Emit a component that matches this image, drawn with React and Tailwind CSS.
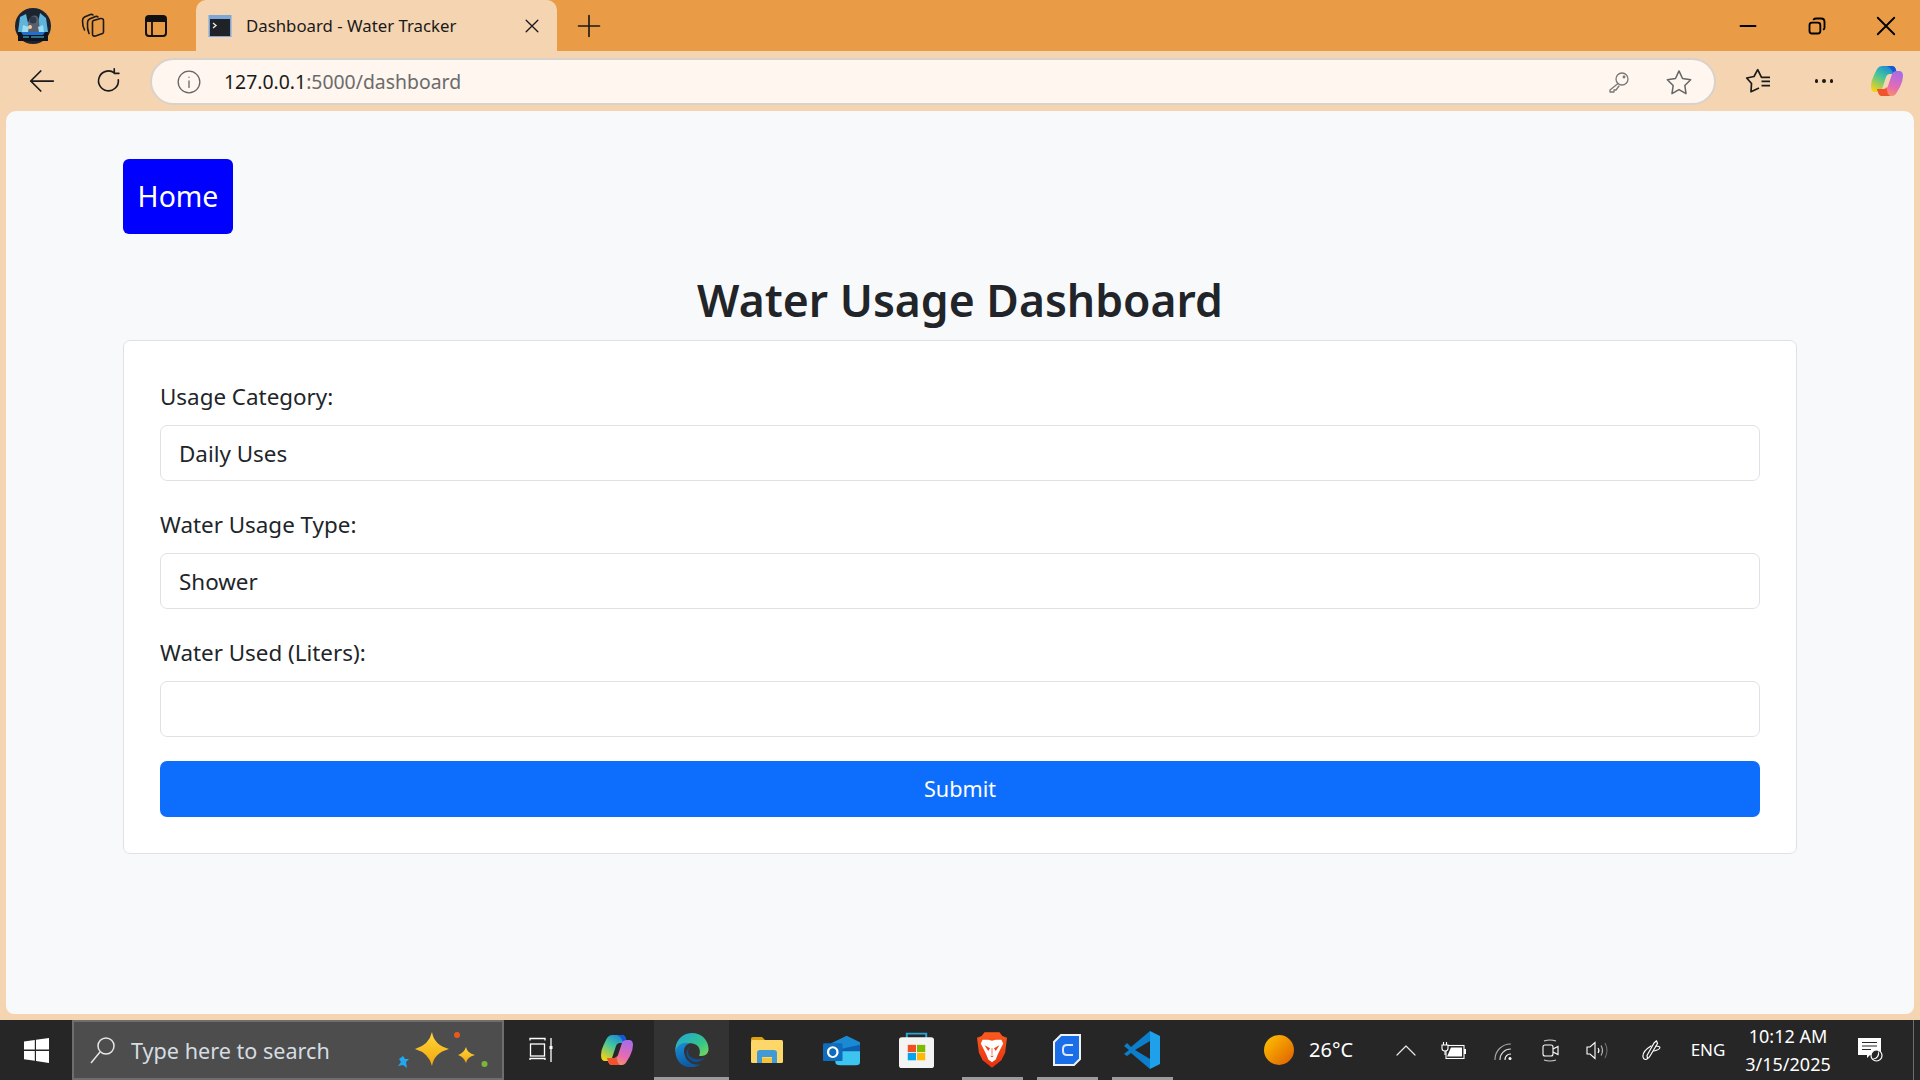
import React from 'react';

const ui = { fontFamily: '"Noto Sans", "Open Sans", sans-serif' };

const Avatar = () => (
  <svg width="36" height="36" viewBox="0 0 36 36">
    <circle cx="18" cy="18" r="18" fill="#1b2431" />
    <path d="M5 9 L11 6 L13 15 L16 10 L20 10 L23 15 L25 5 L31 10 L33 24 H3 Z" fill="#5fb4dc" />
    <path d="M13 24 Q12 12 17 8 Q23 6 24 13 L25 24 Z" fill="#58606e" />
    <circle cx="18" cy="12" r="3.5" fill="#2f3947" />
    <path d="M8 17 L14 19 L13 24 H7 Z M28 17 L23 19 L24 24 H29 Z" fill="#9adcf0" />
    <circle cx="15" cy="19" r="2" fill="#f2c9a0" />
    <rect x="3" y="24" width="30" height="9" fill="#0d1420" />
    <path d="M6 24 H30 L28 27 H8 Z" fill="#1e6fd0" />
    <path d="M8 29 H14 M16 29 H29" stroke="#3d8f9c" strokeWidth="1.6" />
  </svg>
);

const Collections = () => (
  <svg width="25" height="25" viewBox="0 0 25 25" fill="none" stroke="#1a1a1a" strokeWidth="1.6" strokeLinecap="round" strokeLinejoin="round">
    <path d="M12.5 9 Q12.5 8 13.5 7.5 L20.5 5.5 Q23.5 5 23.5 8 V19 Q23.5 20 22.5 20.5 L15.5 23 Q12.5 23.5 12.5 21 Z" />
    <path d="M9 20.5 Q7 16 7.5 10 Q7.5 7 9.5 6 L15.5 3.5 Q17 3 18 4" />
    <path d="M4.5 17 Q2.5 13 2.5 8 Q2.5 5 4.5 4 L10.5 1.5 Q12 1 13 2" />
  </svg>
);

const Sidebar = () => (
  <svg width="24" height="26" viewBox="0 0 24 26" fill="none">
    <rect x="2" y="3" width="20" height="20" rx="3" stroke="#111" strokeWidth="2" />
    <path d="M2 6 Q2 3 5 3 H19 Q22 3 22 6 V9 H2 Z" fill="#111" />
    <path d="M8 9 V23" stroke="#111" strokeWidth="1.8" />
  </svg>
);

const Favicon = () => (
  <svg width="24" height="24" viewBox="0 0 24 24">
    <rect x="0.5" y="1" width="23" height="22" fill="#7ea6d8" />
    <rect x="2" y="5" width="20" height="17" fill="#1f2328" />
    <path d="M5 9 L8 11.5 L5 14" fill="none" stroke="#e8e8e8" strokeWidth="1.4" />
  </svg>
);

const Line = ({ size = 24, children, stroke = '#1a1a1a', width = 1.6 }) => (
  <svg width={size} height={size} viewBox="0 0 24 24" fill="none" stroke={stroke} strokeWidth={width} strokeLinecap="round" strokeLinejoin="round">
    {children}
  </svg>
);

const Copilot = ({ size = 34, id = 'a' }) => (
  <svg width={size} height={size} viewBox="0 0 34 34">
    <defs>
      <linearGradient id={`cpA${id}`} x1="0.8" y1="0" x2="0.2" y2="1">
        <stop offset="0" stopColor="#1b7fe0" />
        <stop offset="0.45" stopColor="#3fc4a0" />
        <stop offset="1" stopColor="#f5d316" />
      </linearGradient>
      <linearGradient id={`cpB${id}`} x1="0.7" y1="0" x2="0.3" y2="1">
        <stop offset="0" stopColor="#a86ce8" />
        <stop offset="0.6" stopColor="#e86bb0" />
        <stop offset="1" stopColor="#f59a5a" />
      </linearGradient>
    </defs>
    <path d="M12 2 H22 Q25 2 26 6 L27 10 H20 Q17 10 16 13 L12 25 Q11 28 8 28 H5 Q1 28 1 22 Q1 17 4 11 L7 5 Q9 2 12 2 Z" fill={`url(#cpA${id})`} />
    <path d="M17 2 H22 Q25 2 26 6 L27 10 H23 Q22 4 17 2 Z" fill="#1558d6" />
    <path d="M22 32 H12 Q9 32 8 28 L7 25 H14 Q17 25 18 22 L22 10 Q23 7 27 7 H29 Q33 7 33 12 Q33 17 30 23 L27 28 Q25 32 22 32 Z" fill={`url(#cpB${id})`} />
    <path d="M12 32 H20 Q17 30 16.5 23 Q16 25 14 25 H7 L8 28 Q9 32 12 32 Z" fill="#f0532d" />
  </svg>
);

const FavStar = () => (
  <svg width="30" height="30" viewBox="0 0 30 30" fill="none" stroke="#1a1a1a" strokeWidth="1.7" strokeLinejoin="round">
    <path d="M27 11.3 H18.5 L14.7 3.7 L11 10.5 L3.7 12 L8.5 17.5 L8 25.7 L16 22" />
    <path d="M18.5 15.3 H27 M18.5 19.7 H27" />
  </svg>
);

const WinLogo = () => (
  <svg width="25" height="25" viewBox="0 0 25 25" fill="#fff">
    <path d="M0 3.6 L10.8 2 V11.6 H0 Z" />
    <path d="M12 1.8 L25 0 V11.6 H12 Z" />
    <path d="M0 13 H10.8 V22.8 L0 21.2 Z" />
    <path d="M12 13 H25 V25 L12 23 Z" />
  </svg>
);

const Sparkles = () => (
  <svg width="92" height="48" viewBox="0 0 92 48">
    <defs>
      <linearGradient id="spark" x1="0" y1="0" x2="0" y2="1">
        <stop offset="0" stopColor="#ffd83b" />
        <stop offset="1" stopColor="#f2a50c" />
      </linearGradient>
    </defs>
    <path d="M36 6 Q38 19 53 23 Q38 27 36 40 Q33 27 19 23 Q33 19 36 6 Z" fill="url(#spark)" />
    <path d="M70 21 Q71 27 79 29 Q71 31 70 37 Q68 31 62 29 Q68 27 70 21 Z" fill="url(#spark)" />
    <path d="M7 30 L9 33 L13 33 L10 36 L11 42 L7 39 L2 40 L5 36 L3 33 Z" fill="#22a7f0" />
    <circle cx="61" cy="9" r="3" fill="#e8591b" />
    <circle cx="88.5" cy="38" r="3" fill="#7db53a" />
  </svg>
);

const TaskView = () => (
  <svg width="26" height="26" viewBox="0 0 26 26" fill="none" stroke="#fff" strokeWidth="1.3">
    <path d="M1 3.5 V1.5 H16 V3.5" />
    <rect x="1.5" y="7" width="14" height="12" />
    <path d="M1 23 V21.5 H16 V23" />
    <path d="M22 1 V25" />
    <rect x="20.5" y="9" width="3" height="3" fill="#fff" stroke="none" />
  </svg>
);

const Edge = () => (
  <svg width="37" height="36" viewBox="0 0 38 38">
    <defs>
      <linearGradient id="edgeA" x1="0" y1="0" x2="1" y2="1">
        <stop offset="0" stopColor="#1fa4dc" />
        <stop offset="0.6" stopColor="#34c48c" />
        <stop offset="1" stopColor="#7fd857" />
      </linearGradient>
      <linearGradient id="edgeB" x1="0" y1="0" x2="0.4" y2="1">
        <stop offset="0" stopColor="#1b8fd8" />
        <stop offset="1" stopColor="#0c59a4" />
      </linearGradient>
    </defs>
    <path d="M19 1 C30 1 37 9 37 18 C37 24 32 26 27 25 C29 21 28 13 19 12 C11 11 5 16 2 21 C1 10 9 1 19 1 Z" fill="url(#edgeA)" />
    <path d="M2 20 C4 13 11 10 17 12 C11 14 10 20 12 25 C14 31 21 36 28 34 C24 37 20 37 17 37 C8 37 2 29 2 20 Z" fill="url(#edgeB)" />
    <path d="M19 15 C14 17 14 24 19 27 C24 30 31 29 34 26 C29 33 21 33 17 29 C12 25 13 17 19 15 Z" fill="#134f8f" />
  </svg>
);

const Folder = () => (
  <svg width="32" height="28" viewBox="0 0 32 28">
    <path d="M0 3 Q0 1 2 1 H11 L15 5 H0 Z" fill="#dca012" />
    <rect x="0" y="4" width="32" height="23" rx="1.5" fill="#fdd768" />
    <path d="M6 27 V17 Q6 14 9 14 H23 Q26 14 26 17 V27 H21 V21 H11 V27 Z" fill="#3f9ad6" />
    <rect x="11" y="22" width="10" height="5" fill="#f3c33c" />
  </svg>
);

const Outlook = () => (
  <svg width="37" height="31" viewBox="0 0 36 38" preserveAspectRatio="none">
    <path d="M8 10 L23 1 L36 9 V18 H8 Z" fill="#1a8ad4" />
    <path d="M36 12 V20 L16 33 L14 18 Z" fill="#0f5fb0" />
    <path d="M12 20 L36 20 V33 Q36 37 32 37 H17 Q12 37 12 33 Z" fill="#3cc6ef" />
    <rect x="0" y="10" width="19" height="22" rx="1.5" fill="#0f6cbd" />
    <ellipse cx="9.5" cy="21" rx="4.6" ry="6" fill="none" stroke="#fff" strokeWidth="2.2" />
  </svg>
);

const Store = () => (
  <svg width="35" height="36" viewBox="0 0 36 42" preserveAspectRatio="none">
    <path d="M8 9 V2 H28 V9" fill="none" stroke="#2aa5d9" strokeWidth="2" />
    <rect x="0" y="6" width="36" height="36" rx="3" fill="#f4f4f4" />
    <rect x="9" y="15" width="8.5" height="8.5" fill="#f25022" />
    <rect x="18.5" y="15" width="8.5" height="8.5" fill="#7fba00" />
    <rect x="9" y="24.5" width="8.5" height="8.5" fill="#00a4ef" />
    <rect x="18.5" y="24.5" width="8.5" height="8.5" fill="#ffb900" />
  </svg>
);

const Brave = () => (
  <svg width="30" height="36" viewBox="0 0 32 38">
    <defs>
      <linearGradient id="braveG" x1="0" y1="0" x2="0" y2="1">
        <stop offset="0" stopColor="#fb5a1f" />
        <stop offset="1" stopColor="#e8300f" />
      </linearGradient>
    </defs>
    <path d="M8 0 H24 L27 4 L32 6 L30 22 L26 30 L16 38 L6 30 L2 22 L0 6 L5 4 Z" fill="url(#braveG)" />
    <path d="M6 8 L12 8 L16 9 L20 8 L26 8 L28 12 L25 18 L22 24 L20 29 L16 32 L12 29 L10 24 L7 18 L4 12 Z" fill="#fff" />
    <path d="M8 14 L14 17 L12 20 Z M24 14 L18 17 L20 20 Z M14 25 H18 L16 27 Z" fill="#f1471d" />
    <path d="M16 17 V24" stroke="#f1471d" strokeWidth="0.8" />
  </svg>
);

const CApp = () => (
  <svg width="28" height="32" viewBox="0 0 28 32">
    <path d="M8 1 H27 V25 L21 31 H1 V8 Z" fill="#1a6fe8" stroke="#f2f2f2" strokeWidth="2" />
    <path d="M20 11 H14 Q10 11 10 15 V17 Q10 21 14 21 H20" fill="none" stroke="#dbe8fb" strokeWidth="2" />
  </svg>
);

const VSCode = () => (
  <svg width="36" height="38" viewBox="0 0 36 38">
    <path d="M26 0 L36 5 V33 L26 38 Z" fill="#1fa0ea" />
    <path d="M26 0 L26 10 L11 19 L26 28 V38 L7 22 L3 25 L0 23 L5 19 L0 15 L3 12 L7 16 Z" fill="#0b7fcc" />
  </svg>
);

const Battery = () => (
  <svg width="25" height="17" viewBox="0 0 25 17" fill="none" stroke="#fff" strokeWidth="1.1">
    <rect x="5" y="3.5" width="18" height="13" />
    <path d="M10 5.5 H21 V14.5 H6 Z" fill="#fff" stroke="none" />
    <rect x="23" y="7" width="2" height="5" fill="#fff" stroke="none" />
    <path d="M1 3 V6.5 Q1 9 4 9 Q7 9 7 6.5 V3 Z" fill="#262626" />
    <path d="M2.5 0 V3 M5.5 0 V3 M4 9 V13" />
  </svg>
);

const Wifi = () => (
  <svg width="18" height="19" viewBox="0 0 18 19" fill="none" strokeWidth="1.2" strokeLinecap="round">
    <path d="M1 18.5 A15.5 15.5 0 0 1 16.5 3" stroke="#a8a8a8" />
    <path d="M6 18.5 A10.5 10.5 0 0 1 16.5 8" stroke="#d6d6d6" />
    <path d="M11 18.5 A5.5 5.5 0 0 1 16.5 13" stroke="#fff" />
    <circle cx="16" cy="17.5" r="1.5" fill="#fff" stroke="none" />
  </svg>
);

const CameraTray = () => (
  <svg width="17" height="23" viewBox="0 0 17 23" fill="none" stroke="#fff" strokeWidth="1.1">
    <path d="M2 2 Q8 0 14 2 M2 21 Q8 23 14 21" stroke="#cfcfcf" />
    <rect x="1" y="6" width="10" height="11" rx="2" />
    <path d="M11 10 L16 7.5 V15.5 L11 13" />
  </svg>
);

const Volume = () => (
  <svg width="22" height="19" viewBox="0 0 22 19" fill="none" stroke="#fff" strokeWidth="1.1">
    <path d="M1 6 H4 L9 1.5 V17.5 L4 13 H1 Z" />
    <path d="M12 7 Q14 9.5 12 12" />
    <path d="M15 4.5 Q18 9.5 15 14.5" stroke="#bdbdbd" />
    <path d="M19 2 Q23 9.5 19 17" stroke="#6e6e6e" />
  </svg>
);

const PenTray = () => (
  <svg width="20" height="21" viewBox="0 0 20 21" fill="none" stroke="#fff" strokeWidth="1.2" strokeLinejoin="round" strokeLinecap="round">
    <path d="M12 3 L14.5 0.8 L15.5 3.5 L8 16 Q7 18 5.5 18.5 L5 15.5 Z" />
    <path d="M9 6 C4 9 0.5 13 1 17 C1.5 20 4.5 20 5.5 18.5" />
    <path d="M14 6 C19 6 20 9 12 11" />
  </svg>
);

const Notification = () => (
  <svg width="25" height="24" viewBox="0 0 25 24">
    <path d="M0 0 H23 V17 H12 L9 20 V17 H0 Z" fill="#fff" />
    <path d="M4 4.5 H19 M4 8 H19 M4 11.5 H13" stroke="#262626" strokeWidth="1.2" />
    <circle cx="18.5" cy="17.5" r="5.5" fill="#262626" stroke="#fff" strokeWidth="1.2" />
    <path d="M20 12.5 A5.5 5.5 0 0 1 14 21 A6.5 6.5 0 0 0 20 12.5 Z" fill="#fff" />
  </svg>
);

const TaskIcon = ({ active, bar, children }) => (
  <div className={`w-[75px] h-full flex items-center justify-center relative ${active ? 'bg-[#333333]' : ''}`}>
    {children}
    {bar && <div className={`absolute bottom-0 h-[3px] bg-[#9b9b9b] ${active ? 'left-0 right-0' : 'left-[8px] right-[6px]'}`} />}
  </div>
);

const Field = ({ label, value, last }) => (
  <div className={last ? 'mb-[24px]' : 'mb-[29px]'}>
    <label className="block text-[22.4px] leading-[30px] h-[30px] mb-[13px] text-[#212529]">{label}</label>
    <input
      readOnly
      value={value}
      className="block w-full h-[56px] px-[18px] rounded-[7px] border border-[#dee2e6] bg-white text-[22.4px] text-[#212529] outline-none"
    />
  </div>
);

export default function App() {
  return (
    <div className="w-[1920px] h-[1080px] overflow-hidden flex flex-col bg-[#f5d4b2]" style={ui}>
      {/* title bar */}
      <div className="h-[51px] shrink-0 flex items-center bg-[#e99b45]">
        <div className="w-[66px] flex justify-center"><Avatar /></div>
        <div className="w-[60px] flex justify-center pr-[8px]"><Collections /></div>
        <div className="w-[62px] flex justify-center pr-[2px]"><Sidebar /></div>
        <div className="ml-[8px] w-[361px] h-full flex items-center rounded-t-[10px] bg-[#f5d4b2] pl-[12px] pr-[15px]">
          <Favicon />
          <span className="ml-[14px] text-[16.8px] text-[#1a1a1a] flex-1 whitespace-nowrap">Dashboard - Water Tracker</span>
          <Line size={20}><path d="M5 5 L19 19 M19 5 L5 19" /></Line>
        </div>
        <div className="ml-[18px]"><Line size={28} width={1.4}><path d="M12 3 V21 M3 12 H21" /></Line></div>
        <div className="ml-auto flex items-center">
          <div className="w-[68px] flex justify-center"><Line size={20} stroke="#000" width={2.2}><path d="M3 12 H21" /></Line></div>
          <div className="w-[70px] flex justify-center">
            <Line size={20} stroke="#000" width={2.2}>
              <rect x="3" y="8" width="13" height="13" rx="3" />
              <path d="M8 4 Q9 3 11 3 H17 Q21 3 21 7 V14 Q21 15.5 20 16" />
            </Line>
          </div>
          <div className="w-[68px] flex justify-center"><Line size={22} stroke="#000" width={2}><path d="M3 3 L21 21 M21 3 L3 21" /></Line></div>
        </div>
      </div>

      {/* toolbar */}
      <div className="h-[60px] shrink-0 flex items-center">
        <div className="w-[84px] flex justify-center"><Line size={30} width={1.4}><path d="M21 12 H3 M11 4 L3 12 L11 20" /></Line></div>
        <div className="w-[49px] flex justify-center"><Line size={28} width={1.4}><path d="M20 11 A8.5 8.5 0 1 1 16.5 5 M16.5 1.5 V5.5 H20.5" /></Line></div>
        <div className="ml-[17px] w-[1566px] h-[47px] mt-[1px] rounded-full border-2 border-[#d9d2ca] bg-[#fef6ef] flex items-center pl-[24px] pr-[21px]">
          <Line size={26} stroke="#666" width={1.2}><circle cx="12" cy="12" r="10" /><path d="M12 11 V17 M12 7.5 V7.6" /></Line>
          <span className="ml-[22px] text-[19.4px] text-[#1a1a1a] flex-1">127.0.0.1<span className="text-[#6b6b6b]">:5000/dashboard</span></span>
          <Line size={24} stroke="#777" width={1.3}>
            <circle cx="15" cy="9" r="6" /><path d="M11 13.5 L3 20 V22 H7 V20 H9 L12 16" /><circle cx="17" cy="7" r="0.8" fill="#777" />
          </Line>
          <div className="ml-[34px]">
            <Line size={28} stroke="#666" width={1.3}><path d="M12 2.5 L15 9 L22 10 L17 15 L18 22 L12 18.5 L6 22 L7 15 L2 10 L9 9 Z" /></Line>
          </div>
        </div>
        <div className="ml-[27px] w-[30px] flex justify-center"><FavStar /></div>
        <div className="ml-[36px] w-[30px] flex justify-center gap-[4px]">
          <span className="w-[3.5px] h-[3.5px] rounded-full bg-[#1a1a1a]" />
          <span className="w-[3.5px] h-[3.5px] rounded-full bg-[#1a1a1a]" />
          <span className="w-[3.5px] h-[3.5px] rounded-full bg-[#1a1a1a]" />
        </div>
        <div className="ml-[31px]"><Copilot id="top" /></div>
      </div>

      {/* page */}
      <div className="flex-1 min-h-0 mx-[6px] rounded-t-[10px] rounded-b-[8px] bg-[#f8f9fa] px-[117px] pt-[48px]">
        <a className="inline-flex items-center justify-center w-[110px] h-[75px] rounded-[6px] bg-[#0000ff] text-white text-[28.4px]">Home</a>
        <h1 className="mt-[28px] h-[77px] text-center text-[44.5px] leading-[76px] font-semibold text-[#212529]">Water Usage Dashboard</h1>
        <div className="mt-[1px] h-[514px] rounded-[7px] border border-[#dee2e6] bg-white px-[36px] pt-[41px]">
          <Field label="Usage Category:" value="Daily Uses" />
          <Field label="Water Usage Type:" value="Shower" />
          <Field label="Water Used (Liters):" value="" last />
          <button className="block w-full h-[56px] rounded-[7px] bg-[#0d6efd] text-white text-[21.6px]">Submit</button>
        </div>
      </div>
      <div className="h-[6px] shrink-0" />

      {/* taskbar */}
      <div className="h-[60px] shrink-0 flex items-center bg-[#262626] text-white">
        <div className="w-[72px] flex justify-center"><WinLogo /></div>
        <div className="w-[432px] h-full flex items-center border-2 border-[#6e6e6e] bg-[#4d4d4d] pl-[16px] pr-[14px]">
          <svg width="26" height="28" viewBox="0 0 26 28" fill="none" stroke="#e6e6e6" strokeWidth="1.5">
            <circle cx="16" cy="10" r="8" />
            <path d="M10 16 L1 27" />
          </svg>
          <span className="ml-[15px] pt-[2px] text-[21.6px] text-[#d5dde2] flex-1 whitespace-nowrap">Type here to search</span>
          <Sparkles />
        </div>
        <TaskIcon><TaskView /></TaskIcon>
        <TaskIcon><Copilot id="bar" /></TaskIcon>
        <TaskIcon active bar><Edge /></TaskIcon>
        <TaskIcon><Folder /></TaskIcon>
        <TaskIcon><Outlook /></TaskIcon>
        <TaskIcon><Store /></TaskIcon>
        <TaskIcon bar><Brave /></TaskIcon>
        <TaskIcon bar><CApp /></TaskIcon>
        <TaskIcon bar><VSCode /></TaskIcon>

        <div className="ml-auto h-full flex items-center">
          <div className="w-[38px] flex justify-center">
            <div className="w-[30px] h-[30px] rounded-full bg-gradient-to-br from-[#fec400] to-[#dc5a00]" />
          </div>
          <div className="w-[85px] pl-[11px] text-[20px] whitespace-nowrap">26°C</div>
          <div className="w-[46px] flex justify-center"><Line size={24} stroke="#e8e8e8" width={1.2}><path d="M3 17 L12 8 L21 17" /></Line></div>
          <div className="w-[49px] flex justify-center"><Battery /></div>
          <div className="w-[50px] flex justify-center"><Wifi /></div>
          <div className="w-[45px] flex justify-center"><CameraTray /></div>
          <div className="w-[48px] flex justify-center"><Volume /></div>
          <div className="w-[62px] flex justify-center"><PenTray /></div>
          <div className="w-[50px] text-center text-[17px]">ENG</div>
          <div className="w-[110px] text-center text-[18px] leading-[28px] whitespace-nowrap">
            <div>10:12 AM</div>
            <div>3/15/2025</div>
          </div>
          <div className="w-[54px] flex justify-center"><Notification /></div>
          <div className="w-[23px] h-full flex justify-end pr-[6px]"><div className="w-px h-full bg-[#6e6e6e]" /></div>
        </div>
      </div>
    </div>
  );
}
